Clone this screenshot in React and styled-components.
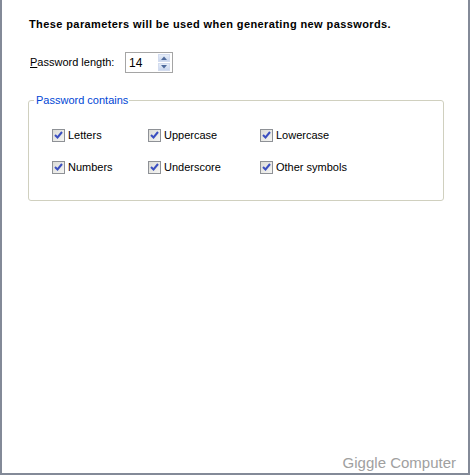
import React from "react";
import styled, { createGlobalStyle } from "styled-components";

const Global = createGlobalStyle`
  html, body { margin: 0; padding: 0; background: #fff; }
  * { box-sizing: border-box; }
`;

const Frame = styled.div`
  width: 470px;
  height: 475px;
  display: flex;
  flex-direction: column;
  background: #fff;
  border-left: 2px solid #838a98;
  border-right: 2px solid #838a98;
  border-bottom: 2px solid #838a98;
  font-family: "Liberation Sans", Arial, sans-serif;
  font-size: 11px;
  color: #000;
`;

const Content = styled.div`
  padding: 18px 0 0 27px;
  display: flex;
  flex-direction: column;
`;

const Title = styled.div`
  font-weight: bold;
  font-size: 11px;
  line-height: 13px;
  letter-spacing: 0.4px;
`;

const LengthRow = styled.div`
  display: flex;
  align-items: center;
  margin-top: 21px;
  padding-left: 1px;
`;

const Label = styled.label`
  width: 95px;
  line-height: 13px;
  u { text-decoration: underline; }
`;

const Spin = styled.div`
  width: 48px;
  height: 21px;
  border: 1px solid #a5a5a5;
  display: flex;
  align-items: center;
  justify-content: space-between;
  padding: 1px 2px 1px 3px;
  background: #fff;
`;

const SpinValue = styled.span`
  font-size: 12px;
  line-height: 14px;
`;

const SpinButtons = styled.div`
  display: flex;
  flex-direction: column;
  gap: 1px;
`;

const SpinButton = styled.div`
  width: 12px;
  height: 8px;
  background: linear-gradient(#e6edf8, #c9d6ee);
  border: 1px solid #d3dcef;
  display: flex;
  align-items: center;
  justify-content: center;
`;

const Group = styled.fieldset`
  margin: 21px 0 0 -1px;
  width: 416px;
  height: 107px;
  border: 1px solid #d0d0bf;
  border-radius: 3px;
  padding: 0 0 0 5px;
`;

const Legend = styled.legend`
  color: #0046d5;
  padding: 0 1px 0 2px;
  font-size: 11px;
  line-height: 13px;
`;

const Options = styled.div`
  display: grid;
  grid-template-columns: 96px 112px auto;
  row-gap: 19px;
  padding: 22px 0 0 18px;
`;

const Option = styled.label`
  display: flex;
  align-items: center;
  gap: 3px;
  line-height: 13px;
`;

const Box = styled.span`
  width: 13px;
  height: 13px;
  border: 1px solid #8e9196;
  background: linear-gradient(135deg, #dcdcd7, #f5f5f3);
  display: flex;
  align-items: center;
  justify-content: center;
`;

const Footer = styled.div`
  margin-top: auto;
  text-align: right;
  padding: 0 12px 2px 0;
  color: #a0a0a0;
  font-size: 15px;
  line-height: 17px;
`;

const Check = () => (
  <Box>
    <svg width="9" height="9" viewBox="0 0 9 9">
      <path d="M1 4 L3.5 6.5 L8 1" fill="none" stroke="#3b4fc0" strokeWidth="2" />
    </svg>
  </Box>
);

const Tri = ({ up }) => (
  <svg width="6" height="4" viewBox="0 0 6 4">
    <path d={up ? "M0 4 L3 0.5 L6 4 Z" : "M0 0 L3 3.5 L6 0 Z"} fill="#4e6a9c" />
  </svg>
);

const options = [
  "Letters",
  "Uppercase",
  "Lowercase",
  "Numbers",
  "Underscore",
  "Other symbols",
];

export default function App() {
  return (
    <>
      <Global />
      <Frame>
        <Content>
          <Title>These parameters will be used when generating new passwords.</Title>
          <LengthRow>
            <Label>
              <u>P</u>assword length:
            </Label>
            <Spin>
              <SpinValue>14</SpinValue>
              <SpinButtons>
                <SpinButton>
                  <Tri up />
                </SpinButton>
                <SpinButton>
                  <Tri />
                </SpinButton>
              </SpinButtons>
            </Spin>
          </LengthRow>
          <Group>
            <Legend>Password contains</Legend>
            <Options>
              {options.map((o) => (
                <Option key={o}>
                  <Check />
                  {o}
                </Option>
              ))}
            </Options>
          </Group>
        </Content>
        <Footer>Giggle Computer</Footer>
      </Frame>
    </>
  );
}
